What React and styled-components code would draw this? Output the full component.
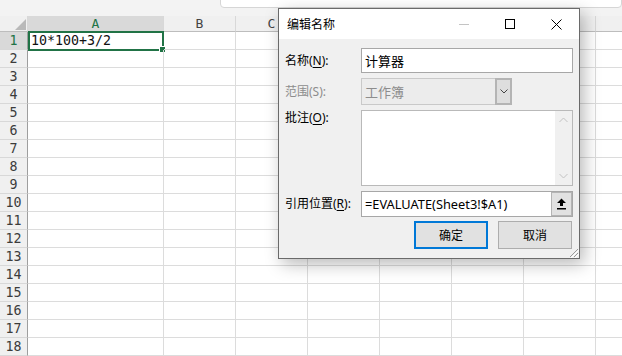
import React from 'react';
import styled, { createGlobalStyle } from 'styled-components';

const GlobalStyle = createGlobalStyle`
  html, body {
    margin: 0;
    padding: 0;
    background: #ffffff;
    overflow: hidden;
  }
`;

// H sits past the window edge, its letter is never seen
const COLUMNS = ['A', 'B', 'C', 'D', 'E', 'F', 'G', ''];
const ROWS = Array.from({ length: 18 }, (_, i) => i + 1);

const App = () => {
  return <Screen>
      <GlobalStyle />
      <TopStrip>
        <FormulaBox />
      </TopStrip>
      <Sheet>
        <Corner>
          <svg width="28" height="16" viewBox="0 0 28 16">
            <polygon points="26,3 26,14 15,14" fill="#b9b9b9" />
          </svg>
        </Corner>
        {COLUMNS.map((c, i) => <ColHead key={i} $active={c === 'A'}>{c}</ColHead>)}
        {ROWS.map((r) => (
          <React.Fragment key={r}>
            <RowHead $active={r === 1}>{r}</RowHead>
            {COLUMNS.map((c, i) => (
              <Cell key={i}>
                {r === 1 && c === 'A' && <>
                  <CellText>10*100+3/2</CellText>
                  <Selection><FillHandle /></Selection>
                </>}
              </Cell>
            ))}
          </React.Fragment>
        ))}
      </Sheet>

      <Dialog>
        <TitleBar>
          <Title>编辑名称</Title>
          <Controls>
            <WinButton>
              <svg width="10" height="10" viewBox="0 0 10 10">
                <line x1="0" y1="5.5" x2="10" y2="5.5" stroke="#c4c4c4" strokeWidth="1" />
              </svg>
            </WinButton>
            <WinButton>
              <svg width="10" height="10" viewBox="0 0 10 10">
                <rect x="0.5" y="0.5" width="9" height="9" fill="none" stroke="#000" strokeWidth="1" />
              </svg>
            </WinButton>
            <WinButton>
              <svg width="11" height="11" viewBox="0 0 11 11">
                <path d="M0.5 0.5 L10.5 10.5 M10.5 0.5 L0.5 10.5" stroke="#000" strokeWidth="1" />
              </svg>
            </WinButton>
          </Controls>
        </TitleBar>

        <Body>
          <Form>
            <Label>名称(<u>N</u>):</Label>
            <TextBox>计算器</TextBox>

            <Label $disabled>范围(S):</Label>
            <Select>
              <SelectText>工作簿</SelectText>
              <DropButton>
                <svg width="8" height="5" viewBox="0 0 8 5">
                  <path d="M0.5 0.5 L4 4 L7.5 0.5" fill="none" stroke="#444" strokeWidth="1" />
                </svg>
              </DropButton>
            </Select>

            <Label $top>批注(<u>O</u>):</Label>
            <Memo>
              <MemoText />
              <ScrollBar>
                <svg width="9" height="6" viewBox="0 0 9 6">
                  <path d="M0.5 5 L4.5 1 L8.5 5" fill="none" stroke="#c2c2c2" strokeWidth="1" />
                </svg>
                <svg width="9" height="6" viewBox="0 0 9 6">
                  <path d="M0.5 1 L4.5 5 L8.5 1" fill="none" stroke="#c2c2c2" strokeWidth="1" />
                </svg>
              </ScrollBar>
            </Memo>

            <Label>引用位置(<u>R</u>):</Label>
            <RefBox>
              <RefText>=EVALUATE(Sheet3!$A1)</RefText>
              <RefButton>
                <svg width="11" height="12" viewBox="0 0 11 12">
                  <path d="M5.5 0.5 L10 5 L7 5 L7 8 L4 8 L4 5 L1 5 Z" fill="#000" />
                  <rect x="1" y="10" width="9" height="1.5" fill="#000" />
                </svg>
              </RefButton>
            </RefBox>

            <ButtonRow>
              <Button $primary>确定</Button>
              <Button>取消</Button>
            </ButtonRow>
          </Form>
        </Body>

        <Grip>
          <svg width="11" height="11" viewBox="0 0 11 11">
            <path d="M10 2 L2 10 M10 6 L6 10" stroke="#9a9a9a" strokeWidth="1" />
            <path d="M11 3 L3 11 M11 7 L7 11" stroke="#ffffff" strokeWidth="1" />
          </svg>
        </Grip>
      </Dialog>
  </Screen>;
};

export default App;

const Screen = styled.div`
    position: relative;
    width: 622px;
    height: 356px;
    overflow: hidden;
    background: #ffffff;
`;

const TopStrip = styled.div`
    height: 16px;
    background: #f3f3f3;
    display: flex;
    align-items: flex-start;
`;

const FormulaBox = styled.div`
    margin-left: 220px;
    margin-top: -6px;
    flex: 1;
    height: 12px;
    background: #ffffff;
    border: 1px solid #d6d6d6;
    border-radius: 4px;
`;

const Sheet = styled.div`
    display: grid;
    grid-template-columns: 28px 136px repeat(7, 72px);
    grid-template-rows: 16px repeat(18, 18px);
    font-family: "DejaVu Sans Mono", "Liberation Mono", monospace;
`;

const Corner = styled.div`
    background: #f0f0f0;
    border-right: 1px solid #d8d8d8;
    border-bottom: 1px solid #bdbdbd;
    box-sizing: border-box;
    svg { display: block; }
`;

const ColHead = styled.div`
    box-sizing: border-box;
    background: ${(p) => (p.$active ? '#d9d9d9' : '#f0f0f0')};
    color: ${(p) => (p.$active ? '#217346' : '#444444')};
    border-right: 1px solid #d8d8d8;
    border-bottom: 1px solid ${(p) => (p.$active ? '#217346' : '#bdbdbd')};
    font-size: 13px;
    line-height: 15px;
    text-align: center;
`;

const RowHead = styled.div`
    box-sizing: border-box;
    background: ${(p) => (p.$active ? '#d9d9d9' : '#f0f0f0')};
    color: ${(p) => (p.$active ? '#217346' : '#3c3c3c')};
    border-right: 1px solid #9e9e9e;
    border-bottom: 1px solid #d8d8d8;
    font-size: 13.3px;
    line-height: 17px;
    text-align: center;
`;

const Cell = styled.div`
    position: relative;
    box-sizing: border-box;
    border-right: 1px solid #dcdcdc;
    border-bottom: 1px solid #dcdcdc;
`;

const CellText = styled.div`
    padding-left: 3px;
    font-size: 13.3px;
    line-height: 18px;
    color: #111111;
`;

const Selection = styled.div`
    position: absolute;
    top: -1px;
    left: 0;
    right: -1px;
    bottom: -2px;
    border: 2px solid #217346;
`;

const FillHandle = styled.div`
    position: absolute;
    right: -4px;
    bottom: -4px;
    width: 5px;
    height: 5px;
    background: #217346;
    border: 1px solid #ffffff;
`;

const Dialog = styled.div`
    position: absolute;
    left: 278px;
    top: 8px;
    width: 302px;
    height: 251px;
    box-sizing: border-box;
    background: #f0f0f0;
    border: 1px solid #6a6a6a;
    box-shadow: 4px 5px 16px rgba(0, 0, 0, 0.28);
    font-family: "Noto Sans", "Noto Sans CJK SC", sans-serif;
    font-size: 12px;
    color: #000000;
`;

const TitleBar = styled.div`
    height: 30px;
    background: #ffffff;
    display: flex;
    align-items: center;
`;

const Title = styled.div`
    flex: 1;
    padding-left: 8px;
    font-size: 12px;
`;

const Controls = styled.div`
    display: flex;
    height: 100%;
`;

const WinButton = styled.div`
    width: 46px;
    height: 100%;
    display: flex;
    align-items: center;
    justify-content: center;
    svg { display: block; }
`;

const Body = styled.div`
    padding: 9px 6px 0 6px;
`;

const Form = styled.div`
    display: grid;
    grid-template-columns: 76px 212px;
    grid-template-rows: 25px 27px 76px 26px auto;
    row-gap: 5px;
`;

const Label = styled.div`
    display: flex;
    align-items: ${(p) => (p.$top ? 'flex-start' : 'center')};
    line-height: 16px;
    color: ${(p) => (p.$disabled ? '#8d8d8d' : '#000000')};
    white-space: nowrap;
    u { text-underline-offset: 2px; }
`;

const TextBox = styled.div`
    box-sizing: border-box;
    background: #ffffff;
    border: 1px solid #a7a7a7;
    padding-left: 3px;
    display: flex;
    align-items: center;
    font-size: 13px;
`;

const Select = styled.div`
    box-sizing: border-box;
    width: 151px;
    display: flex;
    background: #ececec;
    border: 1px solid #c9c9c9;
`;

const SelectText = styled.div`
    flex: 1;
    padding-left: 3px;
    display: flex;
    align-items: center;
    font-size: 13px;
    color: #8d8d8d;
`;

const DropButton = styled.div`
    width: 17px;
    box-sizing: border-box;
    margin: -1px -1px -1px 0;
    background: #dedede;
    border: 2px solid #b4b4b4;
    display: flex;
    align-items: center;
    justify-content: center;
    svg { display: block; }
`;

const Memo = styled.div`
    box-sizing: border-box;
    background: #ffffff;
    border: 1px solid #b9b9b9;
    display: flex;
`;

const MemoText = styled.div`
    flex: 1;
`;

const ScrollBar = styled.div`
    width: 17px;
    background: #f0f0f0;
    display: flex;
    flex-direction: column;
    justify-content: space-between;
    align-items: center;
    padding: 6px 0;
    svg { display: block; }
`;

const RefBox = styled.div`
    box-sizing: border-box;
    background: #ffffff;
    border: 1px solid #a7a7a7;
    display: flex;
`;

const RefText = styled.div`
    flex: 1;
    padding-left: 3px;
    display: flex;
    align-items: center;
    font-size: 12.8px;
    white-space: nowrap;
`;

const RefButton = styled.div`
    width: 21px;
    box-sizing: border-box;
    background: #e1e1e1;
    border: 1px solid #b4b4b4;
    display: flex;
    align-items: center;
    justify-content: center;
    svg { display: block; }
`;

const ButtonRow = styled.div`
    grid-column: 1 / -1;
    display: flex;
    justify-content: flex-end;
    gap: 10px;
    padding-right: 1px;
    margin-top: -1px;
`;

const Button = styled.div`
    width: 74px;
    height: 28px;
    box-sizing: border-box;
    background: #e1e1e1;
    border: ${(p) => (p.$primary ? '2px solid #0078d7' : '1px solid #adadad')};
    display: flex;
    align-items: center;
    justify-content: center;
    font-size: 12px;
`;

const Grip = styled.div`
    position: absolute;
    right: 0;
    bottom: 0;
    svg { display: block; }
`;
